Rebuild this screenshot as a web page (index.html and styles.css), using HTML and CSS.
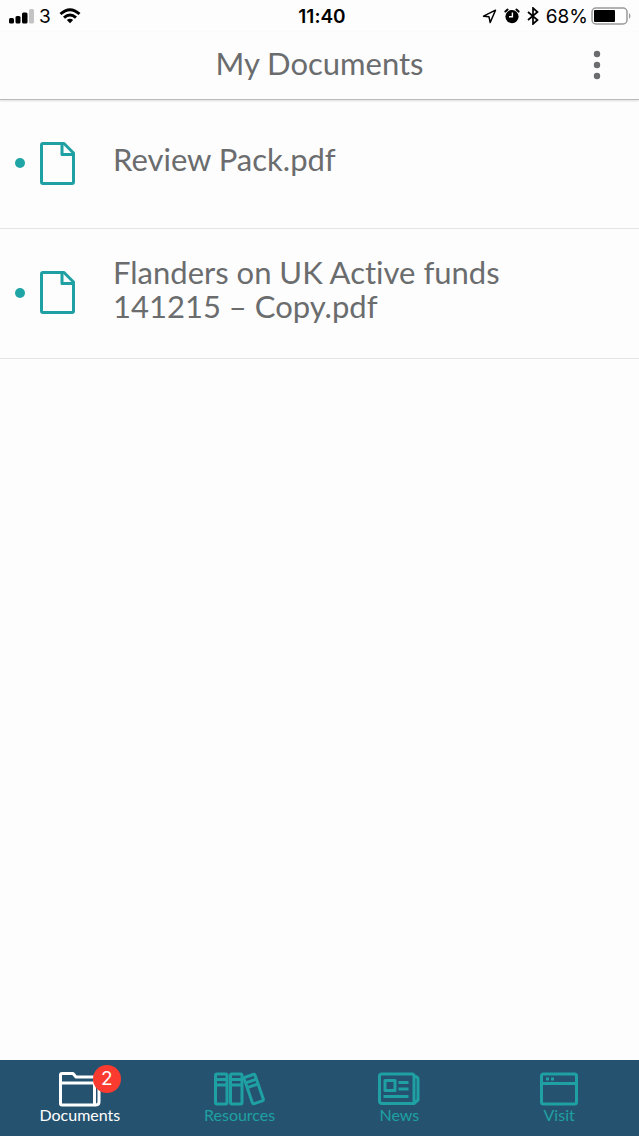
FILE: index.html
```html
<!DOCTYPE html>
<html lang="en">
<head>
    <meta charset="UTF-8">
    <meta name="viewport" content="width=device-width, initial-scale=1">
    <title>My Documents</title>
    <link rel="stylesheet" href="styles.css">
</head>
<body>

    <div class="status">
        <div class="status-left">
            <svg width="26" height="16" viewBox="0 0 26 16">
                <rect x="0" y="10" width="5" height="5.5" rx="1.5"/>
                <rect x="6.5" y="8" width="5" height="7.5" rx="1.5"/>
                <rect x="13" y="4.5" width="5.5" height="11" rx="1.5"/>
                <rect x="20" y="1" width="5" height="14.5" rx="1.5" fill="#c4c4c4"/>
            </svg>
            <span>3</span>
            <svg class="wifi" width="22" height="16" viewBox="0 0 22 16" fill="none" stroke="#000" stroke-width="3">
                <path d="M1.5 6 Q11 -2.6 20.5 6"/>
                <path d="M5 9.6 Q11 4.4 17 9.6"/>
                <path d="M11 15.2 L7.8 12 Q11 9.6 14.2 12 Z" fill="#000" stroke="none"/>
            </svg>
        </div>
        <span class="time">11:40</span>
        <div class="status-right">
            <svg width="15" height="15" viewBox="0 0 15 15" fill="none" stroke="#000" stroke-width="1.5" stroke-linejoin="round">
                <path d="M13.5 1.2 L1.5 7.2 L7 7.8 L8.2 13.5 Z"/>
            </svg>
            <svg class="alarm" width="16" height="16" viewBox="0 0 16 16">
                <circle cx="8" cy="8.6" r="6.6"/>
                <path d="M1.4 3.6 L3.6 1.6 M14.6 3.6 L12.4 1.6" stroke="#000" stroke-width="2" stroke-linecap="round"/>
                <path d="M8.4 4.6 V8.8 H5" fill="none" stroke="#fff" stroke-width="1.4"/>
            </svg>
            <svg class="bluetooth" width="12" height="18" viewBox="0 0 12 18" fill="none" stroke="#000" stroke-width="1.7">
                <path d="M1 5 L10.5 13 L6 17 V1 L10.5 5 L1 13"/>
            </svg>
            <span>68%</span>
            <svg class="battery" width="40" height="18" viewBox="0 0 40 18">
                <rect x="1" y="1" width="35" height="16" rx="4" fill="#fff" stroke="#999" stroke-width="1.5"/>
                <rect x="3" y="3" width="21" height="12" rx="1"/>
                <path d="M38 6 Q41 9 38 12 Z" fill="#999"/>
            </svg>
        </div>
    </div>

    <header class="header">
        <h1>My Documents</h1>
        <button class="menu" type="button" aria-label="More options">
            <svg width="8" height="30" viewBox="0 0 8 30" fill="#6a6c6e">
                <circle cx="4" cy="4" r="3.2"/>
                <circle cx="4" cy="15" r="3.2"/>
                <circle cx="4" cy="26" r="3.2"/>
            </svg>
        </button>
    </header>

    <main class="content">
        <ul class="docs">
            <li>
                <a class="doc" href="#review-pack">
                    <span class="dot"></span>
                    <svg class="page" width="35" height="43" viewBox="0 0 35 43">
                        <path d="M3 1.5 H24 L33.5 11 V40 Q33.5 41.5 32 41.5 H3 Q1.5 41.5 1.5 40 V3 Q1.5 1.5 3 1.5 Z"/>
                        <path d="M22 2 V12.5 H33"/>
                    </svg>
                    <span class="name">Review Pack.pdf</span>
                </a>
            </li>
            <li>
                <a class="doc" href="#flanders">
                    <span class="dot"></span>
                    <svg class="page" width="35" height="43" viewBox="0 0 35 43">
                        <path d="M3 1.5 H24 L33.5 11 V40 Q33.5 41.5 32 41.5 H3 Q1.5 41.5 1.5 40 V3 Q1.5 1.5 3 1.5 Z"/>
                        <path d="M22 2 V12.5 H33"/>
                    </svg>
                    <span class="name">Flanders on UK Active funds 141215 – Copy.pdf</span>
                </a>
            </li>
        </ul>
    </main>

    <nav class="tabs">
        <a class="tab active" href="#documents">
            <span class="icon">
                <svg width="42" height="35" viewBox="0 0 42 35">
                    <path d="M36.5 33 H3 Q1.5 33 1.5 31.5 V3 Q1.5 1.5 3 1.5 H14 L17 5 H36 V10.5"/>
                    <path d="M1.5 11 H34 Q35.5 11 35.5 12.5 V33"/>
                    <path d="M36 5 H38 Q40 5 40 7 V30 Q40 33 36 33"/>
                </svg>
                <span class="badge">2</span>
            </span>
            <span>Documents</span>
        </a>
        <a class="tab" href="#resources">
            <span class="icon">
                <svg width="52" height="35" viewBox="0 0 52 35">
                    <rect x="1.5" y="2" width="11.5" height="30" rx="1.5"/>
                    <path d="M1.5 7.5 H13 M1.5 13 H13"/>
                    <rect x="16.5" y="2" width="11.5" height="30" rx="1.5"/>
                    <path d="M16.5 7.5 H28 M16.5 13 H28"/>
                    <g transform="rotate(-19 40 17)">
                        <rect x="34" y="3" width="11.5" height="28" rx="1.5"/>
                        <path d="M34 8.5 H45.5 M34 13.5 H45.5"/>
                    </g>
                </svg>
            </span>
            <span>Resources</span>
        </a>
        <a class="tab" href="#news">
            <span class="icon">
                <svg width="42" height="35" viewBox="0 0 42 35">
                    <path d="M36 31.5 H4 Q1.5 31.5 1.5 29 V4 Q1.5 2 4 2 H34 Q36 2 36 4 V31.5 L40 28 V7 Q40 5 36 4"/>
                    <rect x="7" y="8.5" width="10" height="10"/>
                    <path d="M20.5 10.5 H30.5 M20.5 17 H30.5 M5.5 24.5 H30.5"/>
                </svg>
            </span>
            <span>News</span>
        </a>
        <a class="tab" href="#visit">
            <span class="icon">
                <svg width="38" height="35" viewBox="0 0 38 35">
                    <rect x="1.5" y="2" width="35" height="30" rx="2"/>
                    <path d="M1.5 11.5 H36.5 M6 7 H9 M11 7 H14"/>
                </svg>
            </span>
            <span>Visit</span>
        </a>
    </nav>

</body>
</html>
```
FILE: styles.css
```css
* {
    box-sizing: border-box;
}

body {
    margin: 0;
    min-height: 100vh;
    display: flex;
    flex-direction: column;
    background: #fdfdfd;
    color: #6a6c6e;
    font-family: "Lato", "Noto Sans", sans-serif;
    font-variant-ligatures: none;
}

a {
    color: inherit;
    text-decoration: none;
}

svg {
    display: block;
}

/* phone status bar */
.status {
    display: grid;
    grid-template-columns: 1fr auto 1fr;
    align-items: center;
    height: 32px;
    padding: 0 8px 0 9px;
    color: #000;
    font-family: "Inter", sans-serif;
    font-size: 19px;
}

.status-left,
.status-right {
    display: flex;
    align-items: center;
    gap: 7px;
}

.status-left {
    gap: 4px;
}

.status-right {
    justify-content: flex-end;
}

.wifi {
    margin-left: 4px;
}

.battery {
    margin-left: -4px;
}

.time {
    padding-left: 4px;
    font-weight: 600;
}

/* title bar */
.header {
    display: grid;
    grid-template-columns: 1fr auto 1fr;
    align-items: center;
    height: 68px;
    padding: 0 30px 2px;
    border-bottom: 1px solid #b9b9bb;
    box-shadow: 0 1px 2px #ddd;
}

.header h1 {
    grid-column: 2;
    margin: 0;
    padding-bottom: 4px;
    font-size: 31px;
    font-weight: 400;
    line-height: 60px;
}

.menu {
    justify-self: end;
    padding: 0 8px;
    border: none;
    background: none;
    cursor: pointer;
}

/* document list */
.content {
    flex: 1;
}

.docs {
    margin: 0;
    padding: 0;
    list-style: none;
}

.doc {
    display: flex;
    align-items: center;
    height: 130px;
    padding: 0 80px 2px 15px;
    border-bottom: 1px solid #e6e6e8;
}

.docs li:first-child .doc {
    height: 129px;
}

.dot {
    flex: none;
    width: 10px;
    height: 10px;
    margin-right: 15px;
    border-radius: 50%;
    background: #1fa5a5;
}

.page {
    flex: none;
    margin-right: 38px;
    fill: none;
    stroke: #1fa0a2;
    stroke-width: 3;
    stroke-linejoin: round;
}

.name {
    padding-bottom: 8px;
    font-size: 31px;
    line-height: 34px;
}

/* bottom tabs */
.tabs {
    display: flex;
    height: 76px;
    background: #25536f;
}

.tab {
    flex: 1;
    display: flex;
    flex-direction: column;
    align-items: center;
    padding-top: 12px;
    color: #1fa0a2;
    font-size: 16px;
    line-height: 16px;
}

.tab.active {
    color: #fff;
}

.icon {
    position: relative;
}

.icon svg {
    fill: none;
    stroke: currentColor;
    stroke-width: 3;
    stroke-linejoin: round;
}

.badge {
    position: absolute;
    top: -7px;
    right: -20px;
    width: 28px;
    height: 28px;
    border-radius: 50%;
    background: #fb3b30;
    font-family: "Inter", sans-serif;
    font-size: 19px;
    line-height: 28px;
    text-align: center;
}
```
